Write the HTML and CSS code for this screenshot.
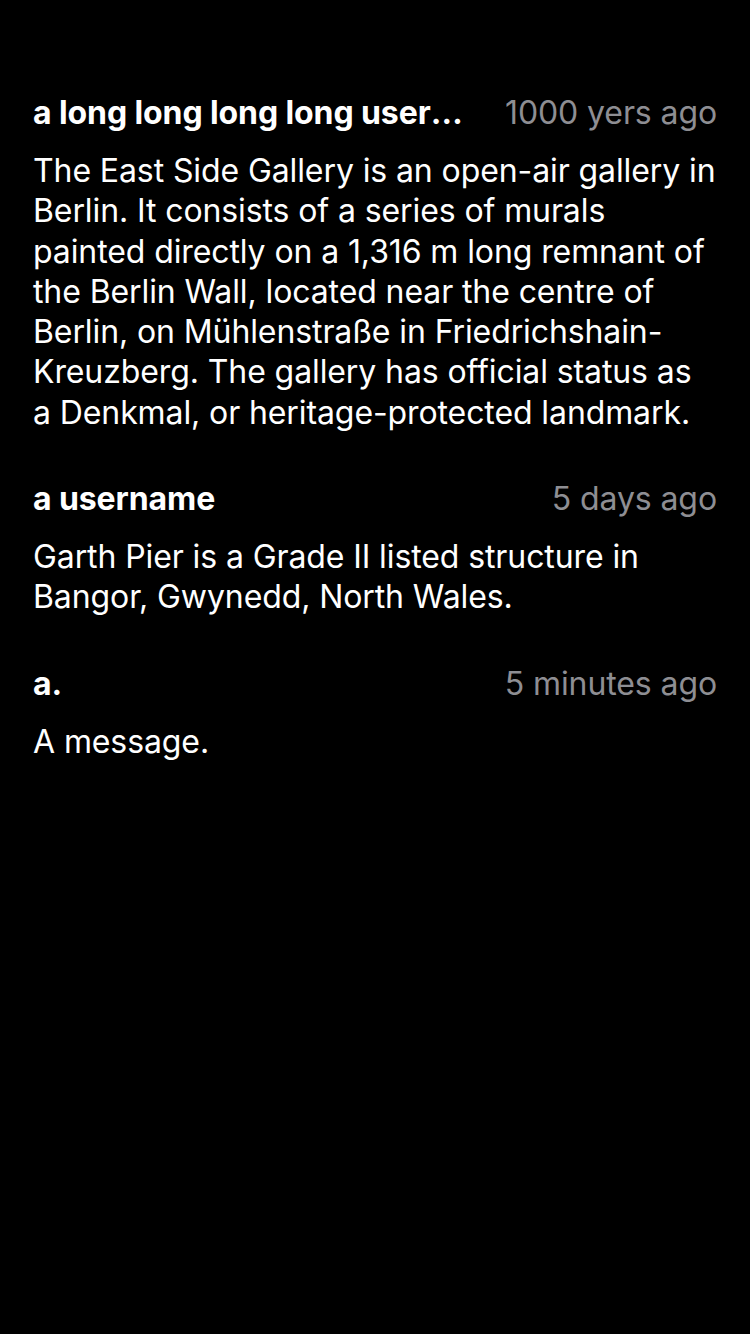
FILE: index.html
```html
<!DOCTYPE html>
<html>
<head>
<meta charset="utf-8">
<link rel="stylesheet" href="styles.css">
</head>
<body>
<main class="list">
  <article class="comment">
    <header class="head">
      <span class="user">a long long long long username that goes on</span>
      <span class="time">1000 yers ago</span>
    </header>
    <p class="msg">The East Side Gallery is an open-air gallery in Berlin. It consists of a series of murals painted directly on a 1,316 m long remnant of the Berlin Wall, located near the centre of Berlin, on Mühlenstraße in Friedrichshain-Kreuzberg. The gallery has official status as a Denkmal, or heritage-protected landmark.</p>
  </article>
  <article class="comment">
    <header class="head">
      <span class="user">a username</span>
      <span class="time">5 days ago</span>
    </header>
    <p class="msg">Garth Pier is a Grade II listed structure in Bangor, Gwynedd, North Wales.</p>
  </article>
  <article class="comment">
    <header class="head">
      <span class="user">a.</span>
      <span class="time">5 minutes ago</span>
    </header>
    <p class="msg">A message.</p>
  </article>
</main>
</body>
</html>
```
FILE: styles.css
```css
html, body {
  margin: 0;
  padding: 0;
  background: #000;
  height: 100%;
}
body {
  font-family: Inter, "Noto Sans", sans-serif;
  color: #fff;
  -webkit-font-smoothing: antialiased;
}
.list {
  padding: 93px 33px 0 33px;
  display: flex;
  flex-direction: column;
  gap: 46px;
}
.comment {
  display: flex;
  flex-direction: column;
  gap: 18px;
}
.head {
  display: flex;
  align-items: center;
  gap: 26px;
  font-size: 32px;
  line-height: 40px;
}
.user {
  flex: 1 1 auto;
  min-width: 0;
  font-weight: 700;
  letter-spacing: -0.1px;
  white-space: nowrap;
  overflow: hidden;
  text-overflow: ellipsis;
}
.time {
  flex: none;
  color: #8e8e93;
  font-weight: 400;
  letter-spacing: -0.1px;
}
.msg {
  margin: 0;
  font-size: 32px;
  line-height: 40.3px;
  letter-spacing: -0.1px;
}
```
